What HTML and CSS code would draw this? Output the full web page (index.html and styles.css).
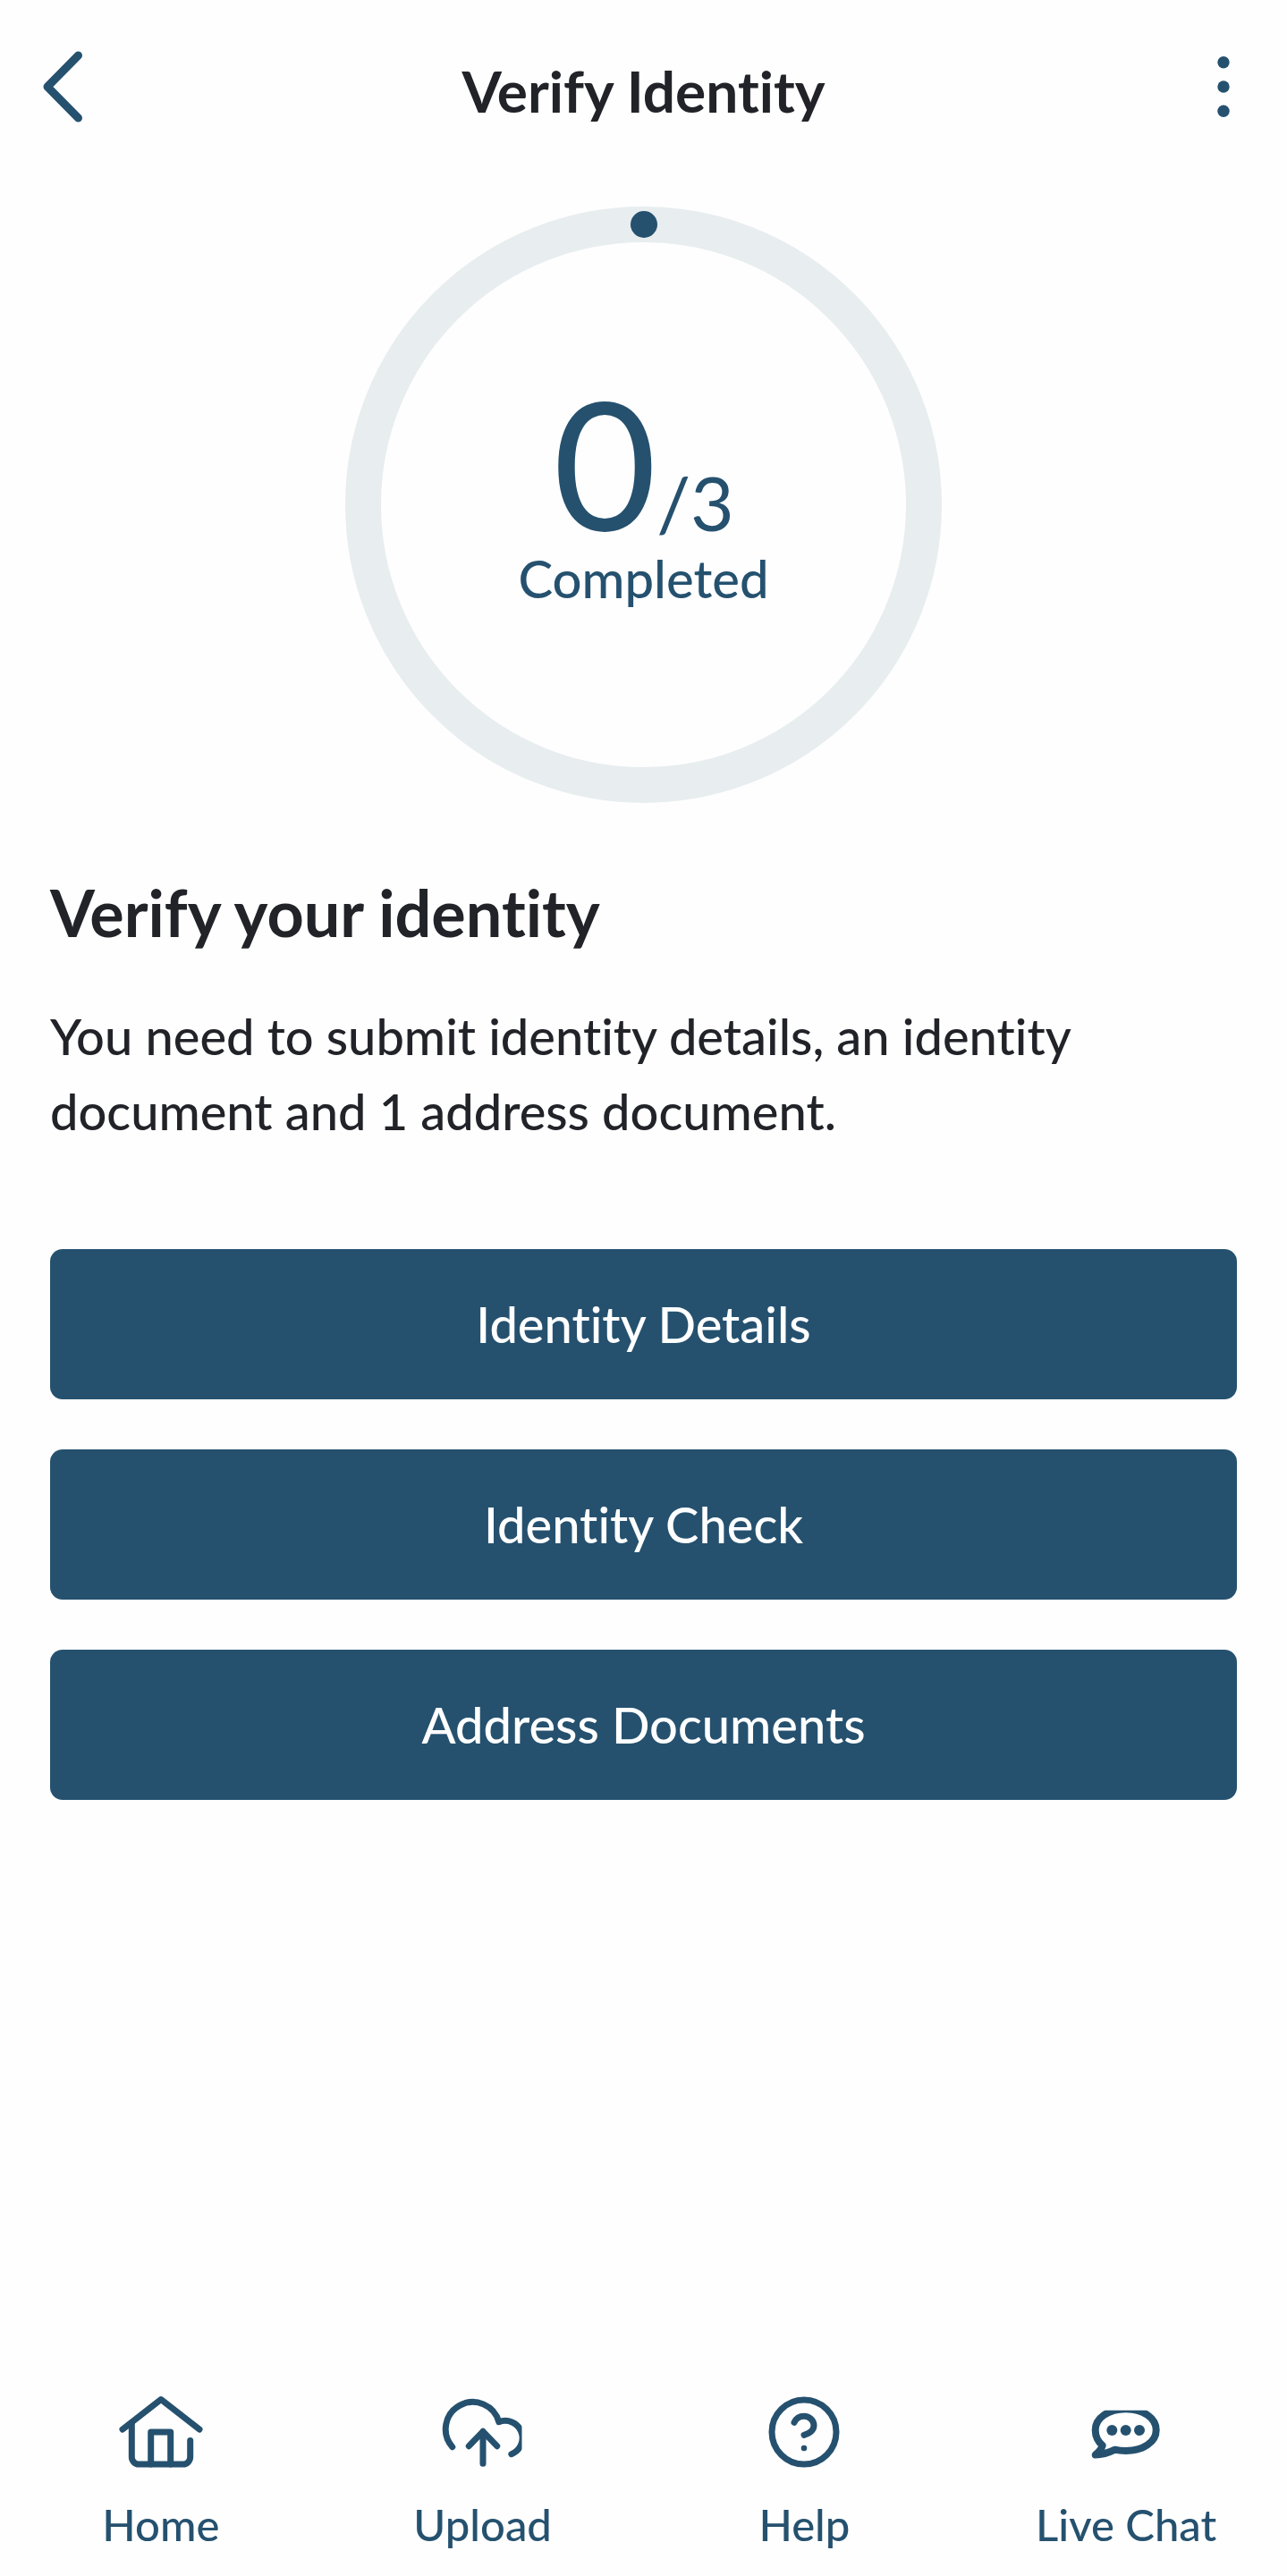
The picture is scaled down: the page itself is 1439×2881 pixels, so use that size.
FILE: index.html
```
<!DOCTYPE html>
<html lang="en">
<head>
  <meta charset="UTF-8" />
  <meta name="viewport" content="width=device-width, initial-scale=1.0"/>
  <title>Verify Identity</title>
  <link rel="stylesheet" href="styles.css">
</head>
<body>

  <div class="app">
    <header class="top-bar">
      <button type="button" class="icon-button" aria-label="Back">
        <svg class="back-icon" viewBox="0 0 48 84" fill="none" stroke="currentColor" stroke-width="9" stroke-linecap="round" stroke-linejoin="round">
          <path d="M39.500 7L5 42l34.500 35" />
        </svg>
      </button>
      <h1>Verify Identity</h1>
      <button type="button" class="icon-button menu-button" aria-label="More options">
        <svg class="menu-icon" viewBox="0 0 14 84" fill="currentColor">
          <circle cx="7" cy="14.700" r="6.700" />
          <circle cx="7" cy="42" r="6.700" />
          <circle cx="7" cy="69.300" r="6.700" />
        </svg>
      </button>
    </header>

    <main>
      <div class="progress">
        <span class="progress-dot"></span>
        <p class="count">0<span class="total">/3</span></p>
        <p class="status">Completed</p>
      </div>

      <h2>Verify your identity</h2>
      <p class="intro">You need to submit identity details, an identity document and 1 address document.</p>

      <div class="steps">
        <button type="button" class="step">Identity Details</button>
        <button type="button" class="step">Identity Check</button>
        <button type="button" class="step">Address Documents</button>
      </div>
    </main>

    <nav class="bottom-nav">
      <a href="#home">
        <svg viewBox="0 0 96 84" fill="none" stroke="currentColor" stroke-width="7" stroke-linecap="round" stroke-linejoin="round">
          <path d="M5 39L48 5.500L91 39" />
          <path d="M15.300 32v38a8 8 0 0 0 8 8h49.400a8 8 0 0 0 8-8V51.500" />
          <path d="M36.700 78V42h22v36" />
        </svg>
        Home
      </a>
      <a href="#upload">
        <svg viewBox="0 0 96 84" fill="none" stroke="currentColor" stroke-width="7" stroke-linecap="round" stroke-linejoin="round">
          <clipPath id="cloud-edge"><path d="M0 0h91.500v84H0z" /></clipPath>
          <path clip-path="url(#cloud-edge)" d="M13.800 58.700A30.300 30.300 0 1 1 65.800 30.700A19 19 0 0 1 79.800 66.700" />
          <path d="M48 77.300v-36M32.300 57.700L48 41.300l15.700 16.400" />
        </svg>
        Upload
      </a>
      <a href="#help">
        <svg viewBox="0 0 96 84" fill="none" stroke="currentColor" stroke-width="7" stroke-linecap="round" stroke-linejoin="round">
          <circle cx="48" cy="42" r="36" />
          <path d="M37 31.300C39 27 43 24.300 48 24.300C54 24.300 59 29 59 34.500C59 40 54 43.500 48 45.300" />
          <circle cx="48" cy="60" r="3.300" fill="currentColor" stroke="none" />
        </svg>
        Help
      </a>
      <a href="#chat">
        <svg viewBox="0 0 96 84" fill="none" stroke="currentColor" stroke-width="8" stroke-linejoin="round">
          <clipPath id="bubble-edge"><path d="M0 17.700h96V84H0z" /></clipPath>
          <path clip-path="url(#bubble-edge)" d="M21.700 57C16.500 52.500 13.700 46 13.700 39.700C13.700 26.500 28 16.300 47.700 16.300S81.700 26.500 81.700 39.700S67.500 63 47.700 63C43 63 39 62.500 35.700 61.700C28 65.500 20 67.500 13.700 67.500C17 65 20.500 61 21.700 57Z" />
          <g fill="currentColor" stroke="none">
            <circle cx="32.300" cy="40" r="6" />
            <circle cx="47.700" cy="40" r="6" />
            <circle cx="63" cy="40" r="6" />
          </g>
        </svg>
        Live Chat
      </a>
    </nav>
  </div>

</body>
</html>
```

FILE: styles.css
```
* {
  margin: 0;
  padding: 0;
  box-sizing: border-box;
}

body {
  font-family: Lato, "Liberation Sans", sans-serif;
  font-size: 56px;
  font-weight: 500;
  font-variant-ligatures: none;
  line-height: 84px;
  color: #212328;
  background-color: #fefefe;
}

.app {
  display: flex;
  flex-direction: column;
  min-height: 100vh;
}

.top-bar {
  display: flex;
  justify-content: space-between;
  align-items: center;
  height: 194px;
  padding: 0 48px;
}

.icon-button {
  display: flex;
  width: 84px;
  color: #25516f;
  background: none;
  border: none;
  cursor: pointer;
}

.menu-button {
  justify-content: flex-end;
  padding-right: 16px;
}

.back-icon {
  width: 48px;
  height: 84px;
}

.menu-icon {
  width: 14px;
  height: 84px;
}

h1 {
  font-size: 64px;
  font-weight: 700;
  line-height: 80px;
  padding-top: 10px;
}

main {
  padding: 37px 56px 56px;
}

.progress {
  position: relative;
  display: flex;
  flex-direction: column;
  align-items: center;
  width: 667px;
  height: 667px;
  margin: 0 auto 80px;
  padding-top: 146px;
  border: 40px solid #e8edef;
  border-radius: 50%;
  color: #25516f;
}

.progress-dot {
  position: absolute;
  top: -35px;
  left: 50%;
  width: 30px;
  height: 30px;
  margin-left: -15px;
  border-radius: 50%;
  background-color: #25516f;
}

.count {
  font-size: 200px;
  font-weight: 400;
  line-height: 200px;
}

.total {
  font-size: 84px;
  line-height: 84px;
}

.status {
  font-size: 58px;
  line-height: 60px;
}

h2 {
  font-size: 72px;
  font-weight: 700;
  margin-bottom: 55px;
}

.intro {
  margin-bottom: 112px;
}

.steps {
  display: flex;
  flex-direction: column;
  gap: 56px;
}

.step {
  height: 168px;
  font: inherit;
  color: white;
  background-color: #25516f;
  border: none;
  border-radius: 14px;
  cursor: pointer;
}

.bottom-nav {
  display: grid;
  grid-template-columns: repeat(4, 1fr);
  margin-top: auto;
  padding-bottom: 26px;
}

.bottom-nav a {
  display: flex;
  flex-direction: column;
  align-items: center;
  gap: 29px;
  font-size: 49px;
  line-height: 64px;
  color: #25516f;
  text-decoration: none;
}

.bottom-nav svg {
  width: 96px;
  height: 84px;
}
```
